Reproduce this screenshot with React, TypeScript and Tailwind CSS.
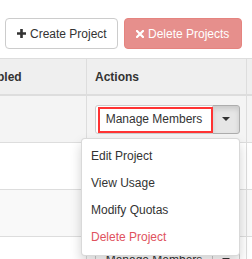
import React from 'react';

const PlusIcon = () => (
  <svg width="9" height="9" viewBox="0 0 9 9" className="shrink-0">
    <path d="M3.2 0h2.6v3.2H9v2.6H5.8V9H3.2V5.8H0V3.2h3.2z" fill="#333" />
  </svg>
);

const RemoveIcon = () => (
  <svg width="8" height="8" viewBox="0 0 8 8" className="shrink-0">
    <path d="M1 1l6 6M7 1L1 7" stroke="#fff" strokeWidth="2.2" strokeLinecap="square" />
  </svg>
);

const Caret = () => (
  <span className="w-0 h-0 border-x-[4px] border-t-[4px] border-x-transparent border-t-[#333]" />
);

interface RowProps {
  bg: string;
  open?: boolean;
}

const ActionGroup: React.FC<{ open?: boolean }> = ({ open }) => (
  <div className="relative flex h-[29px]">
    <button className="relative w-[118px] h-full bg-white border border-[#ccc] rounded-l-[3px] text-[12px] text-[#333]">
      Manage Members
      {open && <span className="absolute left-[2px] top-[1px] w-[115px] h-[26px] border-2 border-[#ff3333]" />}
    </button>
    <button
      className={
        open
          ? 'w-[28px] h-full -ml-px flex items-center justify-center bg-[#e6e6e6] border border-[#adadad] rounded-r-[3px] shadow-[inset_0_3px_5px_rgba(0,0,0,0.125)]'
          : 'w-[28px] h-full -ml-px flex items-center justify-center bg-white border border-[#ccc] rounded-r-[3px]'
      }
    >
      <Caret />
    </button>
    {open && (
      <div className="absolute right-0 top-full mt-[4px] w-[159px] py-[4px] bg-white border border-black/15 rounded-[4px] shadow-[0_6px_12px_rgba(0,0,0,0.175)] z-10">
        {['Edit Project', 'View Usage', 'Modify Quotas'].map(item => (
          <div key={item} className="h-[27px] flex items-center pl-[9px] text-[12px] text-[#333]">
            {item}
          </div>
        ))}
        <div className="h-[27px] flex items-center pl-[9px] text-[12px] text-[#e0525e]">Delete Project</div>
      </div>
    )}
  </div>
);

const Row: React.FC<RowProps> = ({ bg, open }) => (
  <div className={`flex h-[47px] border-b border-[#ddd] ${bg}`}>
    <div className="w-[120px] shrink-0 border-r border-[#ddd]" />
    <div className="w-[160px] shrink-0 border-r border-[#ddd] pl-[8px] flex items-center">
      <ActionGroup open={open} />
    </div>
  </div>
);

export default function App() {
  return (
    <div className="w-[252px] h-[259px] overflow-hidden bg-white font-['Liberation_Sans',Arial,sans-serif] text-[12px] text-[#333]">
      <div className="flex gap-[6px] pl-[5px] pt-[18px]">
        <button className="h-[31px] w-[113px] flex items-center gap-[4px] pl-[11px] bg-white border border-[#ccc] rounded-[4px] text-[12px] text-[#333]">
          <PlusIcon />
          Create Project
        </button>
        <button className="h-[31px] w-[118px] flex items-center gap-[4px] pl-[11px] bg-[#e68f8c] border border-[#e5847f] rounded-[4px] text-[12px] text-white">
          <RemoveIcon />
          Delete Projects
        </button>
      </div>

      <div className="mt-[9px] ml-[-33px] w-[310px] border-t border-[#ddd]">
        <div className="flex h-[37px] border-b-2 border-[#ddd] bg-[#efefef] font-bold">
          <div className="w-[120px] shrink-0 border-r border-[#ddd] pl-[8px] flex items-center">Enabled</div>
          <div className="w-[160px] shrink-0 border-r border-[#ddd] pl-[8px] flex items-center">Actions</div>
        </div>
        <Row bg="bg-[#f4f4f4]" open />
        <Row bg="bg-white" />
        <Row bg="bg-[#f9f9f9]" />
        <Row bg="bg-white" />
      </div>
    </div>
  );
}
